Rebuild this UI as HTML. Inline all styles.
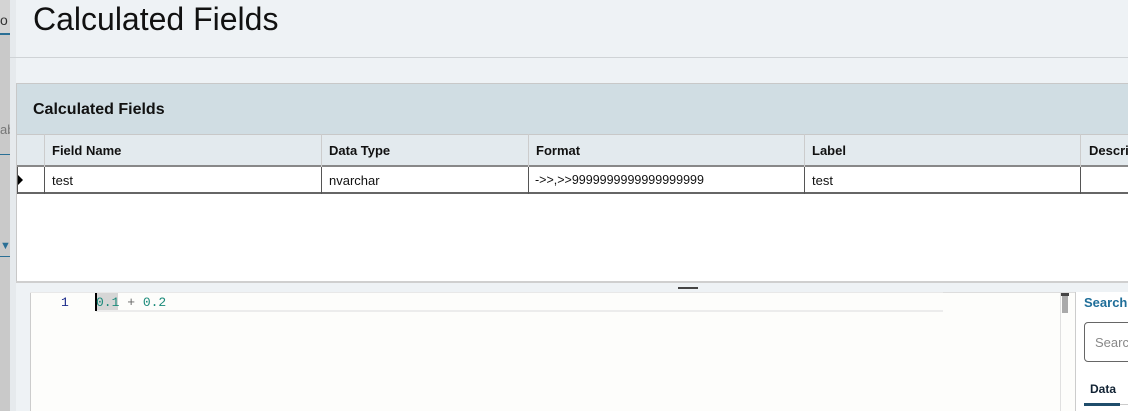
<!DOCTYPE html>
<html><head><style>
*{margin:0;padding:0;box-sizing:border-box}
body{width:1128px;height:411px;overflow:hidden;background:#eef2f5;font-family:"Liberation Sans",sans-serif;position:relative}
.a{position:absolute}
</style></head><body>
<div class="a" style="left:0;top:0;width:10px;height:411px;background:#c9c9c9"></div>
<div class="a" style="left:0;top:0;width:10px;height:34px;background:#d4d4d4"></div>
<div class="a" style="left:0;top:12px;font-size:14px;color:#333">o</div>
<div class="a" style="left:0;top:33px;width:10px;height:2px;background:#2a6f95"></div>
<div class="a" style="left:0;top:122px;font-size:13px;color:#777">ab</div>
<div class="a" style="left:0;top:154px;width:10px;height:1px;background:#2a6f95"></div>
<div class="a" style="left:0;top:240px;font-size:11px;color:#2a6f95">▼</div>
<div class="a" style="left:0;top:256px;width:10px;height:1px;background:#2a6f95"></div>
<div class="a" style="left:10px;top:0;width:6px;height:411px;background:#e6eaed"></div>
<div class="a" style="left:33px;top:0;font-size:32px;color:#111;line-height:38px">Calculated Fields</div>
<div class="a" style="left:10px;top:57px;width:1118px;height:1px;background:#cfd3d6"></div>
<div class="a" style="left:16px;top:83px;width:1112px;height:200px;background:#fff;border:1px solid #c8c8c8;border-right:none"></div>
<div class="a" style="left:17px;top:84px;width:1111px;height:50px;background:#d0dde3"></div>
<div class="a" style="left:33px;top:101px;font-size:16px;font-weight:bold;color:#111">Calculated Fields</div>
<div class="a" style="left:17px;top:134px;width:1111px;height:33px;background:#e3eaee;border-top:1px solid #c8c8c8;border-bottom:2px solid #888"></div>
<div class="a" style="left:17px;top:167px;width:1111px;height:27px;background:#fff;border-bottom:2px solid #666"></div>
<div class="a" style="left:17px;top:167px;width:1px;height:27px;background:#555"></div>
<div class="a" style="left:44px;top:134px;width:1px;height:60px;background:#ccc"></div>
<div class="a" style="left:321px;top:134px;width:1px;height:60px;background:#ccc"></div>
<div class="a" style="left:528px;top:134px;width:1px;height:60px;background:#ccc"></div>
<div class="a" style="left:804px;top:134px;width:1px;height:60px;background:#ccc"></div>
<div class="a" style="left:1080px;top:134px;width:1px;height:60px;background:#ccc"></div>
<div class="a" style="left:44px;top:167px;width:1px;height:27px;background:#555"></div>
<div class="a" style="left:321px;top:167px;width:1px;height:27px;background:#555"></div>
<div class="a" style="left:528px;top:167px;width:1px;height:27px;background:#555"></div>
<div class="a" style="left:804px;top:167px;width:1px;height:27px;background:#555"></div>
<div class="a" style="left:1080px;top:167px;width:1px;height:27px;background:#555"></div>
<div class="a" style="left:18px;top:175px;width:0;height:0;border-top:5px solid transparent;border-bottom:5px solid transparent;border-left:5px solid #000"></div>
<div class="a" style="top:143px;font-size:13px;font-weight:bold;color:#111;left:52px">Field Name</div>
<div class="a" style="top:143px;font-size:13px;font-weight:bold;color:#111;left:329px">Data Type</div>
<div class="a" style="top:143px;font-size:13px;font-weight:bold;color:#111;left:536px">Format</div>
<div class="a" style="top:143px;font-size:13px;font-weight:bold;color:#111;left:812px">Label</div>
<div class="a" style="top:143px;font-size:13px;font-weight:bold;color:#111;left:1089px">Descri</div>
<div class="a" style="top:173px;font-size:13px;color:#111;left:52px">test</div>
<div class="a" style="top:173px;font-size:13px;color:#111;left:329px">nvarchar</div>
<div class="a" style="top:173px;font-size:12.5px;color:#111;left:535px">-&gt;&gt;,&gt;&gt;9999999999999999999</div>
<div class="a" style="top:173px;font-size:13px;color:#111;left:812px">test</div>
<div class="a" style="left:16px;top:281px;width:1112px;height:2px;background:#cfcfcf"></div>
<div class="a" style="left:678px;top:287px;width:20px;height:2px;background:#444"></div>
<div class="a" style="left:30px;top:292px;width:1045px;height:119px;background:#fdfdfb;border-left:1px solid #ccc;border-top:1px solid #ddd"></div>
<div class="a" style="left:30px;top:292px;width:913px;height:1px;background:#e8e8e8"></div>
<div class="a" style="left:96px;top:310px;width:847px;height:2px;background:#ececec"></div>
<div class="a" style="left:61px;top:295px;font-family:'Liberation Mono',monospace;font-size:13px;color:#1a2a8a">1</div>
<div class="a" style="left:96px;top:293px;width:22px;height:17px;background:#d6d6d6"></div>
<div class="a" style="left:95px;top:293px;width:2px;height:18px;background:#000"></div>
<div class="a" style="left:96px;top:295px;font-family:'Liberation Mono',monospace;font-size:13px;color:#1a8a7a;white-space:pre">0.1 <span style="color:#666">+</span> 0.2</div>
<div class="a" style="left:1061px;top:293px;width:8px;height:3px;background:#444"></div>
<div class="a" style="left:1062px;top:296px;width:6px;height:17px;background:#aaa"></div>
<div class="a" style="left:1060px;top:293px;width:1px;height:118px;background:#e0e0e0"></div>
<div class="a" style="left:1075px;top:292px;width:53px;height:119px;background:#fff;border-left:1px solid #ccc"></div>
<div class="a" style="left:1084px;top:295px;font-size:13px;font-weight:bold;color:#1f6e99">Search.</div>
<div class="a" style="left:1084px;top:322px;width:60px;height:40px;border:1px solid #666;border-radius:4px;background:#fff"></div>
<div class="a" style="left:1095px;top:335px;font-size:13px;color:#888">Searc</div>
<div class="a" style="left:1090px;top:382px;font-size:12px;font-weight:bold;color:#123">Data</div>
<div class="a" style="left:1084px;top:403px;width:36px;height:3px;background:#1f4d6b"></div>
<div class="a" style="left:1120px;top:404px;width:8px;height:1px;background:#ccc"></div>
</body></html>
